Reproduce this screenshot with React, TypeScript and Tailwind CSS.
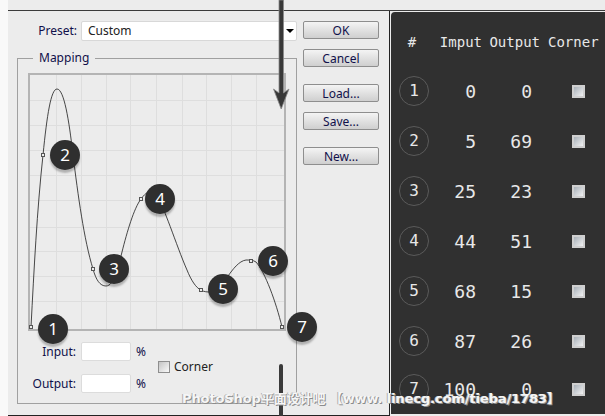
import React from "react";

const BADGES = [
  { n: 1, cls: "left-[10px] top-[241px]" },
  { n: 2, cls: "left-[22px] top-[67px]" },
  { n: 3, cls: "left-[71px] top-[181px]" },
  { n: 4, cls: "left-[117px] top-[111px]" },
  { n: 5, cls: "left-[180px] top-[201px]" },
  { n: 6, cls: "left-[230px] top-[173px]" },
  { n: 7, cls: "left-[259px] top-[239px]" },
];

const ROWS = [
  { n: 1, input: "0", output: "0" },
  { n: 2, input: "5", output: "69" },
  { n: 3, input: "25", output: "23" },
  { n: 4, input: "44", output: "51" },
  { n: 5, input: "68", output: "15" },
  { n: 6, input: "87", output: "26" },
  { n: 7, input: "100", output: "0" },
];

const GRID_X = [57, 82, 107, 131, 157, 183, 207, 232, 257];
const GRID_Y = [101, 126, 151, 176, 201, 228, 252, 277, 302];
const POINTS = [
  [31, 327],
  [43, 155],
  [93, 269],
  [141, 199],
  [201, 290],
  [251, 261],
  [282, 327],
];

const CURVE =
  "M31 327 C34 270 37 210 43 155 C47 115 51 89 57 89 C64 89 69 120 73 155 C78 195 84 240 93 269 C96 280 100 286 106 286 C114 286 118 268 122 252 C127 232 134 208 141 199 C146 192 150 190 155 193 C164 205 176 245 187 270 C191 280 196 288 201 290 C204 292 207 292 212 292 C222 292 232 262 246 260 C250 260 253 260 256 262 C265 272 276 302 282 327";

function Badge({ n, cls }: { n: number; cls: string }) {
  return (
    <div
      className={`absolute ${cls} flex h-[30px] w-[30px] items-center justify-center rounded-full bg-[#2f2f2f] text-[17px] text-white shadow-[0_3px_2px_rgba(0,0,0,0.25)]`}
    >
      {n}
    </div>
  );
}

function DialogButton({ label, cls = "" }: { label: string; cls?: string }) {
  return (
    <button
      className={`h-[18px] w-[76px] rounded-[2px] border border-[#8e8e8e] bg-gradient-to-b from-[#f4f4f4] to-[#cfcfcf] text-[12px] leading-[15px] text-[#10104a] ${cls}`}
    >
      {label}
    </button>
  );
}

function Graph() {
  return (
    <div className="relative h-[258px] w-[258px]">
      <svg viewBox="28 73 258 258" className="h-[258px] w-[258px]">
        {GRID_X.map((x) => (
          <line key={x} x1={x - 0.5} x2={x - 0.5} y1={75} y2={329} stroke="#dedede" />
        ))}
        {GRID_Y.map((y) => (
          <line key={y} x1={30} x2={284} y1={y - 0.5} y2={y - 0.5} stroke="#dedede" />
        ))}
        <rect x={29} y={74} width={256} height={256} fill="none" stroke="#b4b4b4" strokeWidth={2} />
        <path d={CURVE} fill="none" stroke="#1c1c1c" strokeWidth={0.8} />
        {POINTS.map(([x, y]) => (
          <rect key={x} x={x - 1.5} y={y - 1.5} width={3} height={3} fill="#ececec" stroke="#555" strokeWidth={1} />
        ))}
      </svg>
      {BADGES.map((b) => (
        <Badge key={b.n} n={b.n} cls={b.cls} />
      ))}
    </div>
  );
}

function Checkbox() {
  return <div className="h-[13px] w-[13px] border-2 border-[#cfcfcf] bg-gradient-to-br from-[#a8b0b8] to-[#f2f2f2]" />;
}

function NumberInput({ label }: { label: string }) {
  return (
    <div className="flex h-[19px] items-center">
      <span className="w-[48px] text-right text-[12px] text-[#10104a]">{label}</span>
      <div className="ml-[5px] h-[19px] w-[50px] rounded-[2px] border border-[#dcdcdc] bg-white" />
      <span className="ml-[5px] text-[12px] text-[#10104a]">%</span>
    </div>
  );
}

function Mapping() {
  return (
    <div className="mt-[17px] h-[346px] w-[280px] border border-[#a0a0a0] pl-[10px]">
      <div className="-mt-[9px] ml-[5px] w-fit bg-[#ececec] px-[6px] text-[12px] leading-[16px] text-[#10104a]">
        Mapping
      </div>
      <div className="mt-[7px]">
        <Graph />
      </div>
      <div className="mt-[11px] flex">
        <div className="flex flex-col gap-[13px]">
          <NumberInput label="Input:" />
          <NumberInput label="Output:" />
        </div>
        <div className="ml-[12px] mt-[19px] flex h-[12px] items-center">
          <div className="h-[12px] w-[12px] border border-[#8e8e8e] bg-gradient-to-br from-[#c4c4c4] to-[#fafafa]" />
          <span className="ml-[4px] text-[12px] text-[#222]">Corner</span>
        </div>
      </div>
    </div>
  );
}

function Dialog() {
  return (
    <div className="flex h-[405px] w-[382px] border-r border-b border-[#222] bg-[#ececec] pl-[9px] pt-[10px]">
      <div className="w-[280px]">
        <div className="flex h-[20px] items-center">
          <span className="w-[60px] text-right text-[12px] text-[#10104a]">Preset:</span>
          <div className="ml-[4px] flex h-[20px] w-[216px] items-center justify-between rounded-[2px] border border-[#d8d8d8] bg-white pl-[6px] pr-[2px]">
            <span className="text-[12px] text-[#222]">Custom</span>
            <span className="h-0 w-0 border-x-[4px] border-t-[4px] border-x-transparent border-t-black" />
          </div>
        </div>
        <Mapping />
      </div>
      <div className="ml-[6px] flex flex-col">
        <DialogButton
          label="OK"
          cls="border-[#2e9ad8] from-[#eaf6fc] to-[#bcd6e4]"
        />
        <DialogButton label="Cancel" cls="mt-[10px]" />
        <DialogButton label="Load..." cls="mt-[17px]" />
        <DialogButton label="Save..." cls="mt-[10px]" />
        <DialogButton label="New..." cls="mt-[17px]" />
      </div>
    </div>
  );
}

function Table() {
  return (
    <div className="mb-[2px] ml-[1px] mt-[1px] h-[402px] w-[214px] rounded-tl-[4px] bg-[#303030] font-['DejaVu_Sans_Mono',monospace] text-[#e8e8e8]">
      <div className="grid h-[54px] grid-cols-[45px_46px_58px_65px] items-center pt-[6px] text-[14px]">
        <span className="pr-[3px] text-center">#</span>
        <span className="text-right">Imput</span>
        <span className="text-right">Output</span>
        <span className="pl-[8px]">Corner</span>
      </div>
      {ROWS.map((r) => (
        <div
          key={r.n}
          className="grid h-[50px] grid-cols-[45px_40px_56px_73px] items-center text-[18px] font-light last:h-[46px]"
        >
          <div className="ml-[8px] flex h-[30px] w-[30px] items-center justify-center rounded-full border border-[#5a5a5a] text-[16px]">
            {r.n}
          </div>
          <span className="text-right">{r.input}</span>
          <span className="text-right">{r.output}</span>
          <div className="flex justify-end pr-[20px]">
            <Checkbox />
          </div>
        </div>
      ))}
    </div>
  );
}

export default function App() {
  return (
    <div className="relative flex h-[416px] w-[605px] overflow-hidden bg-[#ececec] font-['Noto_Sans',sans-serif]">
      <div className="w-[8px] bg-[#f9f9f9]" />
      <div className="flex-1">
        <div className="h-[11px] border-b border-[#3c3c3c]" />
        <div className="flex">
          <Dialog />
          <Table />
        </div>
      </div>

      {/* arrows drawn over the screenshot */}
      <svg className="absolute left-[270px] top-0 h-[112px] w-[24px]" viewBox="270 0 24 112">
        <path d="M279 0 H283.5 V93 L289 89 L281.2 109 L273.5 89 L279 93 Z" fill="#383838" stroke="#8a8a8a" strokeWidth={0.8} />
      </svg>
      <div className="absolute left-[279px] top-[364px] h-[52px] w-[4px] rounded-t-[2px] bg-[#3a3a3a]" />

      <div className="absolute left-[182px] top-[389px] whitespace-nowrap font-['DejaVu_Sans','Noto_Sans_CJK_SC',sans-serif] text-[13px] font-bold leading-[20px] tracking-[-0.1px] text-[#f6f6f6] [text-shadow:1px_1px_0_#8c8c8c,-1px_0_0_#b0b0b0]">
        PhotoShop平面设计吧 【www. linecg.com/tieba/1783】
      </div>
    </div>
  );
}
